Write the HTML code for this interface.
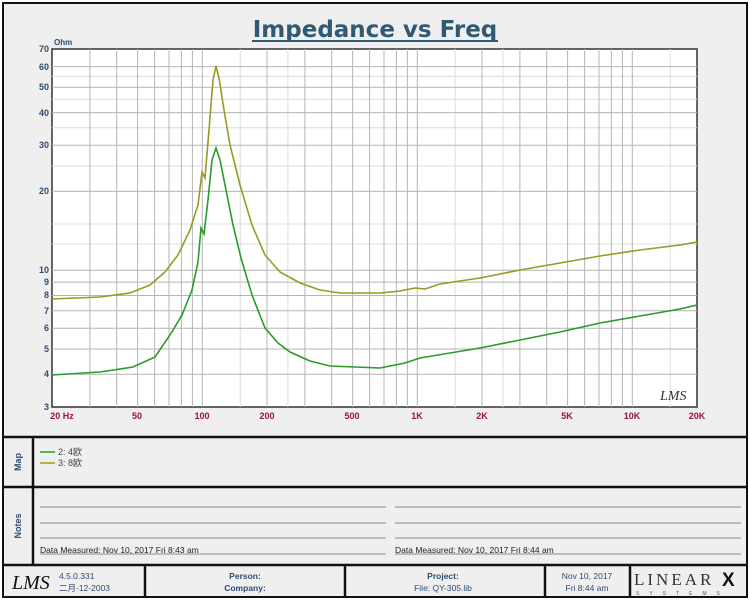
<!DOCTYPE html>
<html><head><meta charset="utf-8"><style>
body{margin:0;width:750px;height:600px;background:#fff;font-family:"Liberation Sans","Noto Sans CJK SC",sans-serif;overflow:hidden}
.frame{position:absolute;left:2px;top:2px;width:742px;height:592px;border:2px solid #111;background:#efefef}
</style></head><body>
<div class="frame"></div>
<svg width="750" height="600" style="position:absolute;left:0;top:0" font-family="Liberation Sans, Noto Sans CJK SC, sans-serif">
<text x="375" y="37" text-anchor="middle" font-size="23" font-weight="bold" fill="#2e5a74" font-family="DejaVu Sans, sans-serif">Impedance vs Freq</text>
<line x1="252" y1="41" x2="498" y2="41" stroke="#2e5a74" stroke-width="2"/>
<rect x="52" y="49" width="645" height="358" fill="#fff" stroke="#333" stroke-width="1.5"/>
<g stroke="#dcdcdc" stroke-width="1">
<line x1="240.2" y1="49" x2="240.2" y2="407"/><line x1="287.9" y1="49" x2="287.9" y2="407"/><line x1="455.2" y1="49" x2="455.2" y2="407"/><line x1="502.9" y1="49" x2="502.9" y2="407"/><line x1="670.2" y1="49" x2="670.2" y2="407"/>
<line x1="52" y1="76.4" x2="697" y2="76.4"/><line x1="52" y1="99.2" x2="697" y2="99.2"/><line x1="52" y1="127.8" x2="697" y2="127.8"/><line x1="52" y1="166" x2="697" y2="166"/><line x1="52" y1="224" x2="697" y2="224"/><line x1="52" y1="244" x2="697" y2="244"/>
</g>
<g stroke="#b4b4b4" stroke-width="1">
<line x1="89.9" y1="49" x2="89.9" y2="407"/><line x1="116.7" y1="49" x2="116.7" y2="407"/><line x1="137.6" y1="49" x2="137.6" y2="407"/><line x1="154.6" y1="49" x2="154.6" y2="407"/><line x1="169" y1="49" x2="169" y2="407"/><line x1="181.4" y1="49" x2="181.4" y2="407"/><line x1="192.4" y1="49" x2="192.4" y2="407"/><line x1="202.3" y1="49" x2="202.3" y2="407"/>
<line x1="267" y1="49" x2="267" y2="407"/><line x1="304.9" y1="49" x2="304.9" y2="407"/><line x1="331.7" y1="49" x2="331.7" y2="407"/><line x1="352.6" y1="49" x2="352.6" y2="407"/><line x1="369.6" y1="49" x2="369.6" y2="407"/><line x1="384" y1="49" x2="384" y2="407"/><line x1="396.4" y1="49" x2="396.4" y2="407"/><line x1="407.4" y1="49" x2="407.4" y2="407"/><line x1="417.3" y1="49" x2="417.3" y2="407"/>
<line x1="482" y1="49" x2="482" y2="407"/><line x1="519.9" y1="49" x2="519.9" y2="407"/><line x1="546.7" y1="49" x2="546.7" y2="407"/><line x1="567.6" y1="49" x2="567.6" y2="407"/><line x1="584.6" y1="49" x2="584.6" y2="407"/><line x1="599" y1="49" x2="599" y2="407"/><line x1="611.4" y1="49" x2="611.4" y2="407"/><line x1="622.4" y1="49" x2="622.4" y2="407"/><line x1="632.3" y1="49" x2="632.3" y2="407"/>
<line x1="52" y1="374.3" x2="697" y2="374.3"/><line x1="52" y1="349" x2="697" y2="349"/><line x1="52" y1="328.2" x2="697" y2="328.2"/><line x1="52" y1="310.7" x2="697" y2="310.7"/><line x1="52" y1="295.5" x2="697" y2="295.5"/><line x1="52" y1="282.1" x2="697" y2="282.1"/><line x1="52" y1="270.2" x2="697" y2="270.2"/><line x1="52" y1="191.4" x2="697" y2="191.4"/><line x1="52" y1="145.3" x2="697" y2="145.3"/><line x1="52" y1="112.6" x2="697" y2="112.6"/><line x1="52" y1="87.3" x2="697" y2="87.3"/><line x1="52" y1="66.6" x2="697" y2="66.6"/>
</g>
<g font-size="9" font-weight="bold" fill="#2e4a74" text-anchor="end">
<text x="49" y="410">3</text><text x="49" y="377">4</text><text x="49" y="352">5</text><text x="49" y="331">6</text><text x="49" y="314">7</text><text x="49" y="298">8</text><text x="49" y="285">9</text><text x="49" y="273">10</text><text x="49" y="194">20</text><text x="49" y="148">30</text><text x="49" y="116">40</text><text x="49" y="90">50</text><text x="49" y="70">60</text><text x="49" y="52">70</text>
</g>
<text x="54" y="45" font-size="8" font-weight="bold" fill="#2e4a74">Ohm</text>
<g font-size="9" font-weight="bold" fill="#9b1040" text-anchor="middle">
<text x="62" y="419">20  Hz</text><text x="137" y="419">50</text><text x="202" y="419">100</text><text x="267" y="419">200</text><text x="352" y="419">500</text><text x="417" y="419">1K</text><text x="482" y="419">2K</text><text x="567" y="419">5K</text><text x="632" y="419">10K</text><text x="697" y="419">20K</text>
</g>
<path d="M52,299 L100,297 L130,293 L150,285 L165,272 L178,255 L190,230 L198,205 L202,172 L205,178 L209,130 L213,80 L216,66 L219,78 L224,110 L230,145 L240,185 L252,225 L265,255 L280,272 L300,283 L320,290 L340,293 L380,293 L400,291 L415,288 L425,289 L440,284 L480,278 L520,270 L560,263 L600,256 L640,250 L680,245 L697,242" fill="none" stroke="#9a9a22" stroke-width="1.6"/>
<path d="M52,375 L100,372 L133,367 L155,357 L170,335 L182,315 L192,290 L198,262 L201,228 L204,234 L208,200 L212,160 L216,148 L220,160 L226,190 L233,225 L241,258 L252,295 L265,328 L278,343 L290,352 L310,361 L330,366 L380,368 L405,363 L420,358 L450,353 L480,348 L520,340 L560,332 L600,323 L640,316 L680,309 L697,305" fill="none" stroke="#2a9a2a" stroke-width="1.6"/>
<text x="660" y="400" font-size="14" font-style="italic" fill="#333" font-family="Liberation Serif, serif">LMS</text>
<g stroke="#111" stroke-width="2.5" fill="none">
<line x1="2" y1="437" x2="747" y2="437"/><line x1="2" y1="487" x2="747" y2="487"/><line x1="2" y1="565" x2="747" y2="565"/>
<line x1="33" y1="437" x2="33" y2="565"/>
<line x1="145" y1="565" x2="145" y2="597"/><line x1="345" y1="565" x2="345" y2="597"/><line x1="545" y1="565" x2="545" y2="597"/><line x1="630" y1="565" x2="630" y2="597"/>
</g>
<text transform="translate(21,462) rotate(-90)" text-anchor="middle" font-size="9" font-weight="bold" fill="#2e4a74">Map</text>
<text transform="translate(21,526) rotate(-90)" text-anchor="middle" font-size="9" font-weight="bold" fill="#2e4a74">Notes</text>
<line x1="40" y1="452" x2="55" y2="452" stroke="#2a9a2a" stroke-width="1.5"/>
<line x1="40" y1="463" x2="55" y2="463" stroke="#9a9a22" stroke-width="1.5"/>
<text x="58" y="455" font-size="9" fill="#444">2: 4欧</text>
<text x="58" y="466" font-size="9" fill="#444">3: 8欧</text>
<g stroke="#888" stroke-width="1">
<line x1="40" y1="507" x2="386" y2="507"/><line x1="40" y1="523" x2="386" y2="523"/><line x1="40" y1="538" x2="386" y2="538"/><line x1="40" y1="554" x2="386" y2="554"/>
<line x1="395" y1="507" x2="741" y2="507"/><line x1="395" y1="523" x2="741" y2="523"/><line x1="395" y1="538" x2="741" y2="538"/><line x1="395" y1="554" x2="741" y2="554"/>
</g>
<text x="40" y="553" font-size="8.5" fill="#222">Data Measured: Nov 10, 2017  Fri  8:43 am</text>
<text x="395" y="553" font-size="8.5" fill="#222">Data Measured: Nov 10, 2017  Fri  8:44 am</text>
<text x="12" y="589" font-size="20" font-style="italic" fill="#111" font-family="Liberation Serif, serif">LMS</text>
<text x="59" y="579" font-size="8.5" fill="#2e4a74">4.5.0.331</text>
<text x="59" y="591" font-size="8.5" fill="#2e4a74">二月-12-2003</text>
<g font-size="8.5" font-weight="bold" fill="#2e4a74" text-anchor="middle">
<text x="245" y="579">Person:</text><text x="245" y="591">Company:</text>
<text x="443" y="579">Project:</text><text x="443" y="591" font-weight="normal">File: QY-305.lib</text>
<text x="587" y="579" font-weight="normal">Nov 10, 2017</text><text x="587" y="591" font-weight="normal">Fri  8:44 am</text>
</g>
<text x="634" y="585" font-size="17" fill="#333" font-family="Liberation Serif, serif" letter-spacing="3">LINEAR</text>
<text x="722" y="586" font-size="19" font-weight="bold" fill="#111">X</text>
<text x="636" y="595" font-size="5" fill="#555" letter-spacing="10">SYSTEMS</text>
</svg>
</body></html>
